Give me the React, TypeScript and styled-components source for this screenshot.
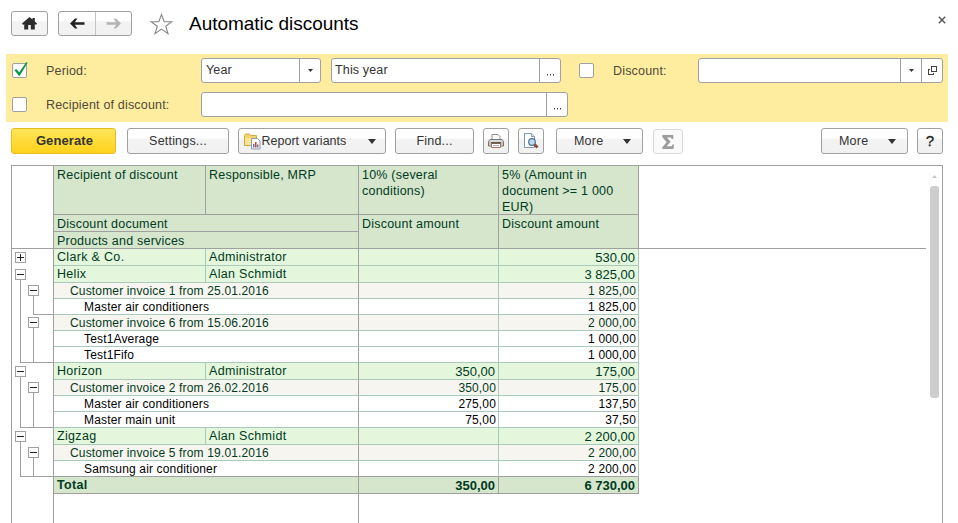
import React from "react";
import styled, { createGlobalStyle, css } from "styled-components";

const LINE = "#a0a0a0";
const SOFT_LINE = "#a9c9bb";

const GlobalStyle = createGlobalStyle`
  *, *::before, *::after { box-sizing: border-box; }
  body {
    margin: 0;
    background: #fff;
    color: #404040;
    font-family: "Liberation Sans", Arial, sans-serif;
    font-size: 13px;
    overflow: hidden;
  }
`;

const Page = styled.div`
  width: 958px;
  height: 523px;
  display: flex;
  flex-direction: column;
  overflow: hidden;
`;

const TitleBar = styled.header`
  height: 54px;
  padding: 11px 12px 0 11px;
  display: flex;
  align-items: flex-start;
`;

const buttonFace = css`
  border: 1px solid ${LINE};
  border-radius: 3px;
  background: linear-gradient(#fff 0%, #fff 38%, #f3f3f3 42%, #f1f1f1 100%);
`;

const HomeButton = styled.button`
  ${buttonFace}
  width: 37px;
  height: 25px;
  padding: 0;
  display: grid;
  place-items: center;
`;

const NavGroup = styled.div`
  ${buttonFace}
  width: 74px;
  height: 25px;
  margin-left: 10px;
  display: flex;
`;

const NavButton = styled.button`
  width: 37px;
  padding: 0;
  border: 0;
  background: none;
  display: grid;
  place-items: center;
  & + & {
    width: 36px;
    border-left: 1px solid #c4c4c4;
  }
`;

const Star = styled.svg`
  margin: 2px 0 0 17px;
`;

const Title = styled.h1`
  margin: 1px 0 0 16px;
  font-size: 19px;
  font-weight: 400;
  line-height: 24px;
  letter-spacing: -0.03px;
  color: #000;
  white-space: nowrap;
`;

const CloseButton = styled.button`
  margin: 5px 0 0 auto;
  padding: 0;
  border: 0;
  background: none;
  line-height: 0;
`;

const Filters = styled.section`
  margin: 0 10px 0 6px;
  height: 68px;
  padding: 4px 5px 0 6px;
  background: #ffed9f;
  display: flex;
  flex-direction: column;
  gap: 9px;
`;

const FilterRow = styled.div`
  height: 25px;
  display: flex;
  align-items: center;
`;

const Checkbox = styled.span<{ $left?: number }>`
  width: 15px;
  height: 15px;
  margin-left: ${(p) => p.$left ?? 0}px;
  border: 1px solid ${LINE};
  border-radius: 2px;
  background: #fff;
  flex: none;
  svg { display: block; margin: -2px 0 0 0; overflow: visible; }
`;

const FilterLabel = styled.label<{ $width: number }>`
  width: ${(p) => p.$width}px;
  margin-left: 19px;
  font-size: 12.5px;
  letter-spacing: 0.18px;
  color: #4e4a3a;
  white-space: nowrap;
  flex: none;
`;

const Field = styled.div<{ $width: number; $left?: number }>`
  width: ${(p) => p.$width}px;
  height: 25px;
  margin-left: ${(p) => p.$left ?? 0}px;
  border: 1px solid ${LINE};
  border-radius: 3px;
  background: #fff;
  display: flex;
  flex: none;
`;

const FieldValue = styled.span<{ $pad?: number }>`
  flex: 1;
  padding-left: ${(p) => p.$pad ?? 4}px;
  font-size: 12.5px;
  line-height: 23px;
  letter-spacing: 0.15px;
  color: #333;
`;

const FieldButton = styled.button`
  width: 21px;
  padding: 0;
  border: 0;
  border-left: 1px solid ${LINE};
  background: none;
  display: grid;
  place-items: center;
`;

const DotsButton = styled(FieldButton)`
  padding-top: 9px;
`;

const Toolbar = styled.nav`
  height: 43px;
  padding: 6px 15px 0 11px;
  display: flex;
`;

const ToolButton = styled.button<{ $width: number; $left?: number; $primary?: boolean }>`
  ${buttonFace}
  width: ${(p) => p.$width}px;
  height: 26px;
  margin-left: ${(p) => p.$left ?? 0}px;
  padding: 0;
  display: flex;
  align-items: center;
  justify-content: center;
  flex: none;
  font: 400 12.5px/24px "Liberation Sans", Arial, sans-serif;
  letter-spacing: 0.2px;
  color: #333;
  white-space: nowrap;
  ${(p) =>
    p.$primary &&
    css`
      font-weight: 700;
      font-size: 13px;
      letter-spacing: 0.1px;
      padding-left: 2px;
      border-color: #e9bd1f;
      background: linear-gradient(#ffe558, #ffd21c);
    `}
`;

const MenuLabel = styled.span<{ $left: number; $width: number }>`
  width: ${(p) => p.$width}px;
  margin-left: ${(p) => p.$left}px;
  text-align: left;
`;

const VariantsLabel = styled(MenuLabel)`
  letter-spacing: 0;
`;

const SumButton = styled(ToolButton)`
  height: 25px;
  margin-top: 1px;
  border-color: #dadada;
  background: #fafafa;
`;

const HelpText = styled.span`
  font-size: 15px;
  letter-spacing: 0;
  color: #222;
  -webkit-text-stroke: 0.3px #222;
`;

const Spacer = styled.div`
  flex: 1;
`;

const Sheet = styled.main`
  width: 932px;
  height: 358px;
  margin-left: 11px;
  border: 1px solid ${LINE};
  border-bottom: 0;
  display: flex;
`;

const Report = styled.div`
  width: 914px;
  display: flex;
  flex-direction: column;
`;

const HeaderRow = styled.div`
  height: 83px;
  flex: none;
  border-bottom: 1px solid ${LINE};
  display: flex;
`;

const HeaderGutter = styled.div`
  width: 42px;
  border-right: 1px solid ${LINE};
`;

const HeaderGrid = styled.div`
  width: 585px;
  display: grid;
  grid-template-columns: 152px 153px 140px 140px;
  grid-template-rows: 49px 17px 16px;
  background: #d6e6cd;
  color: #003a22;
`;

const HeaderCell = styled.div<{ $cols?: number; $rows?: number; $last?: boolean }>`
  grid-column: span ${(p) => p.$cols ?? 1};
  grid-row: span ${(p) => p.$rows ?? 1};
  padding: 1px 0 0 3px;
  border-right: 1px solid ${LINE};
  border-bottom: ${(p) => (p.$last ? 0 : 1)}px solid ${LINE};
  font-size: 12.5px;
  line-height: 16px;
  letter-spacing: 0.22px;
  white-space: pre;
`;

type Kind = "group" | "document" | "item" | "total";

const isTall = (kind: Kind) => kind === "group" || kind === "total";

const rowLook = {
  group: css`
    height: 17px;
    background: #e4f6dc;
    color: #003a22;
  `,
  document: css`
    height: 16px;
    background: #f7f5ef;
    color: #003a22;
  `,
  item: css`
    height: 16px;
    background: #fff;
    color: #000;
  `,
  total: css`
    height: 17px;
    background: #d6e6cd;
    color: #003a22;
    font-weight: 700;
  `,
};

const Row = styled.div`
  display: flex;
  flex: none;
`;

const Gutter = styled.div`
  width: 42px;
  border-right: 1px solid ${LINE};
  line-height: 0;
`;

const Cells = styled.div<{ $kind: Kind }>`
  width: 585px;
  display: flex;
  ${(p) => rowLook[p.$kind]}
`;

const Cell = styled.div<{ $kind: Kind; $width: number; $indent?: number; $anchor?: boolean; $strong?: boolean }>`
  width: ${(p) => p.$width}px;
  flex: none;
  padding-left: ${(p) => p.$indent ?? 3}px;
  border-right: 1px solid ${(p) => (p.$anchor || p.$kind === "total" ? LINE : SOFT_LINE)};
  border-bottom: 1px solid ${(p) => (p.$strong || p.$kind === "total" ? LINE : SOFT_LINE)};
  font-size: ${(p) => (isTall(p.$kind) ? 12.5 : 12)}px;
  line-height: ${(p) => (isTall(p.$kind) ? 17 : 16)}px;
  letter-spacing: ${(p) => (isTall(p.$kind) ? 0.32 : 0.16)}px;
  white-space: pre;
`;

const Amount = styled(Cell)`
  padding: 0 ${(p) => (isTall(p.$kind) ? 3 : 2)}px 0 0;
  font-size: ${(p) => (isTall(p.$kind) ? 13 : 12)}px;
  letter-spacing: ${(p) => (isTall(p.$kind) ? 0 : 0.15)}px;
  text-align: right;
`;

const Blank = styled.div`
  flex: 1;
  display: flex;
`;

const BlankColumn = styled.div<{ $width: number }>`
  width: ${(p) => p.$width}px;
  border-right: 1px solid ${LINE};
`;

const ScrollTrack = styled.div`
  width: 16px;
  padding: 9px 0 0 4px;
  svg { display: block; margin-left: 2px; }
`;

const ScrollThumb = styled.div`
  width: 9px;
  height: 212px;
  margin-top: 8px;
  border-radius: 3px;
  background: #cdcdcd;
`;

const Caret = ({ size = 5 }: { size?: number }) => (
  <svg width={size} height={size === 5 ? 3 : 5} viewBox="0 0 8 5" preserveAspectRatio="none">
    <path d="M0 0H8L4 5Z" fill="#333" />
  </svg>
);

const Dots = () => (
  <svg width="9" height="2" viewBox="0 0 9 2">
    <path d="M1 0h1v1.5H1zM4 0h1v1.5H4zM7 0h1v1.5H7z" fill="#444" />
  </svg>
);

type Branch = {
  toggle?: { level: 0 | 1; closed?: boolean };
  outer?: boolean;
  inner?: boolean;
  end?: 0 | 1;
};

function TreeCell({ height, branch }: { height: number; branch: Branch }) {
  const { toggle, outer, inner, end } = branch;
  const top = height === 17 ? 3 : 2;
  const x = toggle?.level === 1 ? 16 : 3;
  return (
    <svg width="41" height={height} viewBox={`0 0 41 ${height}`} shapeRendering="crispEdges">
      {outer && <rect x="8" y="0" width="1" height={height} fill={LINE} />}
      {inner && <rect x="21" y="0" width="1" height={height} fill={LINE} />}
      {end !== undefined && (
        <rect x={end === 0 ? 8 : 21} y={height - 1} width={end === 0 ? 33 : 20} height="1" fill={LINE} />
      )}
      {toggle && (
        <>
          <rect x={x + 0.5} y={top + 0.5} width="10" height="10" fill="#fff" stroke={LINE} />
          <rect x={x + 2} y={top + 5} width="7" height="1" fill="#222" />
          {toggle.closed ? (
            <rect x={x + 5} y={top + 2} width="1" height="7" fill="#222" />
          ) : (
            <rect x={x + 5} y={top + 11} width="1" height={height - top - 11} fill={LINE} />
          )}
        </>
      )}
    </svg>
  );
}

type Line = {
  kind: Kind;
  name: string;
  person?: string;
  ten?: string;
  five: string;
  branch: Branch;
  strong?: boolean;
};

const groupOpen: Branch = { toggle: { level: 0 } };
const documentOpen: Branch = { outer: true, toggle: { level: 1 } };
const itemInside: Branch = { outer: true, inner: true };
const itemLast: Branch = { outer: true, inner: true, end: 0 };

const lines: Line[] = [
  { kind: "group", name: "Clark & Co.", person: "Administrator", five: "530,00", branch: { toggle: { level: 0, closed: true } } },
  { kind: "group", name: "Helix", person: "Alan Schmidt", five: "3 825,00", branch: groupOpen },
  { kind: "document", name: "Customer invoice 1 from 25.01.2016", five: "1 825,00", branch: documentOpen },
  { kind: "item", name: "Master air conditioners", five: "1 825,00", branch: { outer: true, inner: true, end: 1 } },
  { kind: "document", name: "Customer invoice 6 from 15.06.2016", five: "2 000,00", branch: documentOpen },
  { kind: "item", name: "Test1Average", five: "1 000,00", branch: itemInside },
  { kind: "item", name: "Test1Fifo", five: "1 000,00", branch: itemLast },
  { kind: "group", name: "Horizon", person: "Administrator", ten: "350,00", five: "175,00", branch: groupOpen },
  { kind: "document", name: "Customer invoice 2 from 26.02.2016", ten: "350,00", five: "175,00", branch: documentOpen },
  { kind: "item", name: "Master air conditioners", ten: "275,00", five: "137,50", branch: itemInside },
  { kind: "item", name: "Master main unit", ten: "75,00", five: "37,50", branch: itemLast },
  { kind: "group", name: "Zigzag", person: "Alan Schmidt", five: "2 200,00", branch: groupOpen },
  { kind: "document", name: "Customer invoice 5 from 19.01.2016", five: "2 200,00", branch: documentOpen },
  { kind: "item", name: "Samsung air conditioner", five: "2 200,00", branch: itemLast, strong: true },
  { kind: "total", name: "Total", ten: "350,00", five: "6 730,00", branch: {} },
];

const indents = { group: 3, document: 16, item: 30, total: 3 };

function ReportLine({ line }: { line: Line }) {
  const { kind, strong } = line;
  return (
    <Row>
      <Gutter>
        <TreeCell height={isTall(kind) ? 17 : 16} branch={line.branch} />
      </Gutter>
      <Cells $kind={kind}>
        {line.person ? (
          <>
            <Cell $kind={kind} $width={152}>{line.name}</Cell>
            <Cell $kind={kind} $width={153} $anchor>{line.person}</Cell>
          </>
        ) : (
          <Cell $kind={kind} $width={305} $indent={indents[kind]} $anchor $strong={strong}>{line.name}</Cell>
        )}
        <Amount $kind={kind} $width={140} $strong={strong}>{line.ten}</Amount>
        <Amount $kind={kind} $width={140} $strong={strong}>{line.five}</Amount>
      </Cells>
    </Row>
  );
}

const Arrow = ({ color, flip }: { color: string; flip?: boolean }) => (
  <svg width="15" height="11" viewBox="0 0 15 11">
    <path
      d="M0 5.5 5 .4h2.400L4.800 4.200H14.500v2.600H4.800L7.400 10.600H5z"
      fill={color}
      transform={flip ? "matrix(-1 0 0 1 15 0)" : undefined}
    />
  </svg>
);

export default function App() {
  return (
    <>
      <GlobalStyle />
      <Page>
        <TitleBar>
          <HomeButton aria-label="Home">
            <svg width="15" height="13" viewBox="0 0 15 13">
              <path d="M7.5 0 0 6.600l1.100 1.300 1.100-.9V12.500h4V8h2.600v4.500h4V7l1.100.9L15 6.600l-2.200-2V1h-2.300v1.600z" fill="#2c2c2c" />
            </svg>
          </HomeButton>
          <NavGroup>
            <NavButton aria-label="Back"><Arrow color="#222" /></NavButton>
            <NavButton aria-label="Forward"><Arrow color="#b4b4b4" flip /></NavButton>
          </NavGroup>
          <Star width="24" height="22" viewBox="0 0 24 22">
            <path d="M12.5 1.5 15.2 8.7H22.8L16.7 13.2 19 20.6 12.5 16.1 6 20.6 8.3 13.2 2.2 8.7H9.8Z" fill="#fff" stroke="#868686" strokeWidth="1.1" />
          </Star>
          <Title>Automatic discounts</Title>
          <CloseButton aria-label="Close">
            <svg width="8" height="8" viewBox="0 0 8 8">
              <path d="M.8.8l6.4 6.4M7.2.8.8 7.2" stroke="#555" strokeWidth="1.4" />
            </svg>
          </CloseButton>
        </TitleBar>

        <Filters>
          <FilterRow>
            <Checkbox>
              <svg width="15" height="15" viewBox="0 0 15 15">
                <path d="M1.500 8.200 3.200 7l3 3.200L13.200.2 14.800.6 6.800 13.800 5.800 13.800Z" fill="#0e9648" />
              </svg>
            </Checkbox>
            <FilterLabel $width={155}>Period:</FilterLabel>
            <Field $width={120}>
              <FieldValue>Year</FieldValue>
              <FieldButton><Caret /></FieldButton>
            </Field>
            <Field $width={230} $left={10}>
              <FieldValue $pad={3}>This year</FieldValue>
              <DotsButton><Dots /></DotsButton>
            </Field>
            <Checkbox $left={18} />
            <FilterLabel $width={85}>Discount:</FilterLabel>
            <Field $width={245}>
              <FieldValue />
              <FieldButton><Caret /></FieldButton>
              <FieldButton>
                <svg width="9" height="9" viewBox="0 0 9 9" fill="none" stroke="#444" shapeRendering="crispEdges">
                  <path d="M3.500.5h5v5h-5zM2 3.500H.5v5h5V7" />
                </svg>
              </FieldButton>
            </Field>
          </FilterRow>
          <FilterRow>
            <Checkbox />
            <FilterLabel $width={155}>Recipient of discount:</FilterLabel>
            <Field $width={367}>
              <FieldValue />
              <DotsButton><Dots /></DotsButton>
            </Field>
          </FilterRow>
        </Filters>

        <Toolbar>
          <ToolButton $width={105} $primary>Generate</ToolButton>
          <ToolButton $width={102} $left={11}>Settings...</ToolButton>
          <ToolButton $width={148} $left={9}>
            <svg width="17" height="17" viewBox="0 0 17 17">
              <path d="M.5 2.500 1.500 1h4l1 1.500h6v10H.5z" fill="#f4d36a" stroke="#d3a93e" />
              <path d="M1 5h11v7H1z" fill="#fae596" />
              <path d="M7.500 5.500h6l2.500 2.500v8h-8.500z" fill="#f7f9fc" stroke="#8a9cb2" />
              <path d="M9 11h1.500v3.500H9z" fill="#4b7fc1" />
              <path d="M11 9h1.500v5.500H11z" fill="#d0463c" />
              <path d="M13 11.500h1.500v3H13z" fill="#777" />
            </svg>
            <VariantsLabel $left={1} $width={106}>Report variants</VariantsLabel>
            <Caret size={8} />
            <MenuLabel $left={0} $width={5} />
          </ToolButton>
          <ToolButton $width={79} $left={9}>Find...</ToolButton>
          <ToolButton $width={26} $left={9} aria-label="Print">
            <svg width="16" height="15" viewBox="0 0 16 15">
              <path d="M4 .5h6l2 2V6H4z" fill="#fff" stroke="#8c8c8c" />
              <path d="M2 5.500h12l1.500 2V12H.5V7.500z" fill="#c8c8c8" stroke="#747474" />
              <path d="M2 7h12" stroke="#eee" />
              <path d="M3.500 9.500h9v4h-9z" fill="#fff" stroke="#b2714f" />
              <path d="M5 11.500h6" stroke="#9fb6d3" />
              <path d="M3 8h10v1.500H3z" fill="#555" />
            </svg>
          </ToolButton>
          <ToolButton $width={26} $left={9} aria-label="Preview">
            <svg width="16" height="16" viewBox="0 0 16 16">
              <path d="M1.500.5h7l3 3v11h-10z" fill="#fff" stroke="#7f97b8" />
              <path d="M8.500.5v3h3" fill="#dce7f3" stroke="#7f97b8" />
              <path d="m11 11 3.500 3.500" stroke="#8d4a2c" strokeWidth="2.800" />
              <circle cx="9" cy="9" r="3.300" fill="#b9dcf2" stroke="#56708e" strokeWidth="1.200" />
            </svg>
          </ToolButton>
          <ToolButton $width={87} $left={12}>
            <MenuLabel $left={6} $width={49}>More</MenuLabel>
            <Caret size={8} />
          </ToolButton>
          <SumButton $width={30} $left={10} aria-label="Sum">
            <svg width="12" height="14" viewBox="0 0 12 14">
              <path d="M.3 0h11v4H9.700C9.500 2.800 9 2.400 7.800 2.400H5L8.600 6.700 4.600 11.300H8.300c1.300 0 1.800-.6 2.100-1.900H12L11.500 14H.2v-1.600L4.600 7.300.3 2z" fill="#9c9c9c" />
            </svg>
          </SumButton>
          <Spacer />
          <ToolButton $width={87}>
            <MenuLabel $left={6} $width={49}>More</MenuLabel>
            <Caret size={8} />
          </ToolButton>
          <ToolButton $width={26} $left={9}><HelpText>?</HelpText></ToolButton>
        </Toolbar>

        <Sheet>
          <Report>
            <HeaderRow>
              <HeaderGutter />
              <HeaderGrid>
                <HeaderCell>Recipient of discount</HeaderCell>
                <HeaderCell>Responsible, MRP</HeaderCell>
                <HeaderCell>{"10% (several\nconditions)"}</HeaderCell>
                <HeaderCell>{"5% (Amount in\ndocument >= 1 000\nEUR)"}</HeaderCell>
                <HeaderCell $cols={2}>Discount document</HeaderCell>
                <HeaderCell $rows={2} $last>Discount amount</HeaderCell>
                <HeaderCell $rows={2} $last>Discount amount</HeaderCell>
                <HeaderCell $cols={2} $last>Products and services</HeaderCell>
              </HeaderGrid>
            </HeaderRow>
            {lines.map((line, i) => (
              <ReportLine key={i} line={line} />
            ))}
            <Blank>
              <BlankColumn $width={42} />
              <BlankColumn $width={305} />
            </Blank>
          </Report>
          <ScrollTrack>
            <svg width="5" height="3" viewBox="0 0 5 3">
              <path d="M2.500 0 5 3H0z" fill="#c4c4c4" />
            </svg>
            <ScrollThumb />
          </ScrollTrack>
        </Sheet>
      </Page>
    </>
  );
}
